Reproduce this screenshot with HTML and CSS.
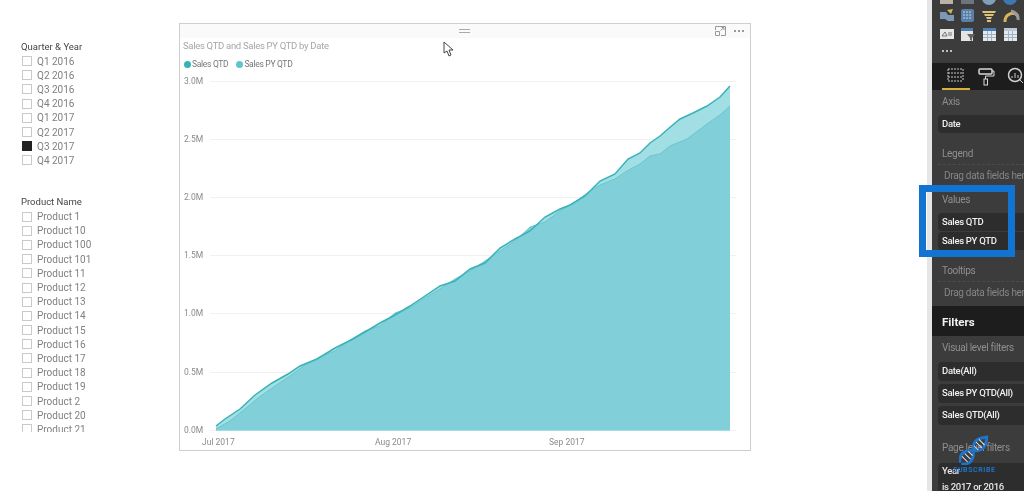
FILE: index.html
```html
<!DOCTYPE html>
<html lang="en">
<head>
  <meta charset="UTF-8">
  <title>Sales QTD report</title>
  <link rel="stylesheet" href="styles.css">
</head>
<body>
  <div class="page">

    <div class="slicers">
      <div class="slicer">
        <div class="slicer-title">Quarter &amp; Year</div>
        <div class="item"><span class="box"></span>Q1 2016</div>
        <div class="item"><span class="box"></span>Q2 2016</div>
        <div class="item"><span class="box"></span>Q3 2016</div>
        <div class="item"><span class="box"></span>Q4 2016</div>
        <div class="item"><span class="box"></span>Q1 2017</div>
        <div class="item"><span class="box"></span>Q2 2017</div>
        <div class="item"><span class="box checked"></span>Q3 2017</div>
        <div class="item"><span class="box"></span>Q4 2017</div>
      </div>
      <div class="slicer products">
        <div class="slicer-title">Product Name</div>
        <div class="item"><span class="box"></span>Product 1</div>
        <div class="item"><span class="box"></span>Product 10</div>
        <div class="item"><span class="box"></span>Product 100</div>
        <div class="item"><span class="box"></span>Product 101</div>
        <div class="item"><span class="box"></span>Product 11</div>
        <div class="item"><span class="box"></span>Product 12</div>
        <div class="item"><span class="box"></span>Product 13</div>
        <div class="item"><span class="box"></span>Product 14</div>
        <div class="item"><span class="box"></span>Product 15</div>
        <div class="item"><span class="box"></span>Product 16</div>
        <div class="item"><span class="box"></span>Product 17</div>
        <div class="item"><span class="box"></span>Product 18</div>
        <div class="item"><span class="box"></span>Product 19</div>
        <div class="item"><span class="box"></span>Product 2</div>
        <div class="item"><span class="box"></span>Product 20</div>
        <div class="item"><span class="box"></span>Product 21</div>
      </div>
    </div>

    <div class="chart-card">
      <div class="card-top">
        <div class="handle"></div>
        <svg class="focus-icon" width="11" height="10" viewBox="0 0 11 10">
          <path d="M.5 4V.5h10v9H6M.5 5.500h4v4h-4zM5.500 4.500 9 1.500M6.500 1.500H9V4" fill="none" stroke="#9a9a9a"/>
        </svg>
        <div class="more"><span></span><span></span><span></span></div>
      </div>
      <div class="chart-title">Sales QTD and Sales PY QTD by Date</div>
      <div class="legend">
        <div class="legend-item"><span class="dot"></span>Sales QTD</div>
        <div class="legend-item"><span class="dot py"></span>Sales PY QTD</div>
      </div>
      <svg class="plot" width="570" height="378" viewBox="180 72 570 378">
        <g class="grid">
          <line x1="210" y1="80.5" x2="736" y2="80.5"/>
          <line x1="210" y1="138.5" x2="736" y2="138.5"/>
          <line x1="210" y1="196.5" x2="736" y2="196.5"/>
          <line x1="210" y1="254.5" x2="736" y2="254.5"/>
          <line x1="210" y1="312.5" x2="736" y2="312.5"/>
          <line x1="210" y1="371.5" x2="736" y2="371.5"/>
          <line x1="210" y1="429.5" x2="736" y2="429.5"/>
        </g>
        <g class="axis">
          <text x="184" y="83">3.0M</text>
          <text x="184" y="141">2.5M</text>
          <text x="184" y="199">2.0M</text>
          <text x="184" y="257">1.5M</text>
          <text x="184" y="315">1.0M</text>
          <text x="184" y="374">0.5M</text>
          <text x="184" y="432">0.0M</text>
          <text x="202" y="444">Jul 2017</text>
          <text x="375" y="444">Aug 2017</text>
          <text x="549" y="444">Sep 2017</text>
        </g>
        <polygon class="area-qtd" points="216,429.500 216,425 225,418 240,408 255,394 272,382 288,373 300,365 317,358 335,347 353,338 365,331 380,322 395,314 410,305 425,295 440,285 455,280 470,268 485,262 500,247 515,238 530,230 545,216 560,208 570,204 585,195 600,180 615,173 628,158 640,152 650,142 660,135 668,128 680,118 693,112 707,105 720,96 730,85 730,429.500"/>
        <polygon class="area-py" points="216,429.500 216,428 230,420 245,408 258,397 275,385 290,375 305,364 320,356 335,350 350,339 365,330 380,325 395,312 410,307 425,297 440,288 455,278 470,270 485,260 500,250 515,240 530,226 545,221 560,210 575,201 590,190 600,184 615,178 627,170 640,163 650,155 660,153 670,145 687,138 707,123 720,114 730,105 730,429.500"/>
        <polyline class="line-py" points="216,428 230,420 245,408 258,397 275,385 290,375 305,364 320,356 335,350 350,339 365,330 380,325 395,312 410,307 425,297 440,288 455,278 470,270 485,260 500,250 515,240 530,226 545,221 560,210 575,201 590,190 600,184 615,178 627,170 640,163 650,155 660,153 670,145 687,138 707,123 720,114 730,105"/>
        <polyline class="line-qtd" points="216,425 225,418 240,408 255,394 272,382 288,373 300,365 317,358 335,347 353,338 365,331 380,322 395,314 410,305 425,295 440,285 455,280 470,268 485,262 500,247 515,238 530,230 545,216 560,208 570,204 585,195 600,180 615,173 628,158 640,152 650,142 660,135 668,128 680,118 693,112 707,105 720,96 730,85"/>
      </svg>
    </div>

    <div class="panel">
      <div class="viz-icons">
        <svg width="92" height="63" viewBox="933 0 92 63">
          <rect x="941" y="-6" width="13" height="10" fill="#b9b2a4"/>
          <rect x="962" y="-6" width="13" height="10" fill="#6d7480"/>
          <circle cx="990" cy="-2" r="7" fill="#7f9fbd"/>
          <circle cx="1011" cy="-2" r="7" fill="#3d78b0"/>
          <path d="M941 12h6l2 3h6v6h-6l-3-2h-5z" fill="#7d97b5"/>
          <path d="M948 10l6-1-2 5z" fill="#d6b65c"/>
          <rect x="962" y="9" width="13" height="13" rx="2" fill="#5b7fa8"/>
          <path d="M964 12h9M964 15h9M964 18h9" stroke="#c5d4e4" stroke-dasharray="2 1"/>
          <path d="M983 11h14l-1 2h-12zM985 14h10l-1 2h-8zM987 17h6l-1 2h-4zM988 20h4v2h-4z" fill="#d9c47a"/>
          <path d="M1006 22a7.500 8 0 0 1 13-6" fill="none" stroke="#d6b65c" stroke-width="3"/>
          <path d="M1012 11a8 8 0 0 1 7 9" fill="none" stroke="#9b9b9b" stroke-width="3"/>
          <rect x="941" y="29" width="14" height="10" fill="#e6e6e6"/>
          <path d="M943 36l3-4 2 4zM949 33h4M949 35h4" stroke="#777" fill="none"/>
          <rect x="962" y="28" width="12" height="13" fill="#e4e4e4"/>
          <rect x="962" y="28" width="12" height="3" fill="#4d7fb5"/>
          <path d="M968 34h8l-3 4v3l-2-1v-2z" fill="#666"/>
          <rect x="984" y="28" width="13" height="13" fill="#e8e8e8"/>
          <rect x="984" y="28" width="13" height="3" fill="#4d7fb5"/>
          <path d="M988.500 31v10M992.500 31v10M984 34.500h13M984 37.500h13" stroke="#9bb3cc"/>
          <rect x="1005" y="28" width="13" height="13" fill="#e8e8e8"/>
          <rect x="1005" y="28" width="13" height="3" fill="#b9c6d4"/>
          <path d="M1009.500 31v10M1013.500 31v10M1005 34.500h13M1005 37.500h13" stroke="#9bb3cc"/>
          <g fill="#bdbdbd">
            <rect x="943" y="50" width="2" height="2"/>
            <rect x="947" y="50" width="2" height="2"/>
            <rect x="951" y="50" width="2" height="2"/>
          </g>
        </svg>
      </div>

      <div class="tabs">
        <svg width="92" height="26" viewBox="933 63 92 26">
          <path d="M949 69h15M949 73h15M949 77h15M949 81h15M949 69v12M964 69v12" fill="none" stroke="#c9c9c9" stroke-dasharray="2 1"/>
          <rect x="980" y="69" width="13" height="5" rx="1" fill="none" stroke="#d8d8d8" stroke-width="1.500"/>
          <path d="M993 71h2v5h-8.500v3" fill="none" stroke="#d8d8d8"/>
          <rect x="985" y="79" width="3.500" height="6" fill="none" stroke="#d8d8d8"/>
          <circle cx="1016" cy="75" r="6.500" fill="none" stroke="#d0d0d0" stroke-width="1.500"/>
          <path d="M1013 78v-2M1016 78v-5M1019 78v-3M1021 80l3 3" stroke="#d0d0d0" fill="none"/>
        </svg>
      </div>

      <div class="label first">Axis</div>
      <div class="field">Date</div>

      <div class="label">Legend</div>
      <div class="well">Drag data fields here</div>

      <div class="label values">Values</div>
      <div class="field">Sales QTD</div>
      <div class="field tight">Sales PY QTD</div>

      <div class="label">Tooltips</div>
      <div class="well tall">Drag data fields here</div>

      <div class="filters-bar">Filters</div>

      <div class="label visual">Visual level filters</div>
      <div class="field filter first-filter">Date(All)</div>
      <div class="field filter">Sales PY QTD(All)</div>
      <div class="field filter">Sales QTD(All)</div>

      <div class="label page-level">Page level filters</div>
      <div class="year-box">
        <div>Year</div>
        <div>is 2017 or 2016</div>
      </div>
    </div>

    <div class="highlight"></div>

    <div class="watermark">
      <svg width="30" height="30" viewBox="0 0 30 30">
        <g transform="translate(15 15) rotate(-45)" fill="none">
          <path d="M-19-1C-13-8-7-7-1 0S11 7 19-1" stroke="#1f74c8" stroke-width="3"/>
          <path d="M-19 1C-13 8-7 7-1 0S11-7 19 1" stroke="#1f74c8" stroke-width="3"/>
          <path d="M-13-4v8M-9-4v8M-5-3v6M3-3v6M7-4v8M11-4v8" stroke="#d5e6f5"/>
        </g>
      </svg>
      <div class="subscribe">SUBSCRIBE</div>
    </div>

    <svg class="cursor" width="11" height="16" viewBox="0 0 11 16">
      <path d="M1 1v11l3-2 2 5 2-1-2-5h4z" fill="#fff" stroke="#444"/>
    </svg>

  </div>
</body>
</html>
```

FILE: styles.css
```css
body {
  margin: 0;
  background: #fff;
  font-family: Roboto, "Liberation Sans", sans-serif;
  font-size: 10px;
}

.page {
  position: relative;
  display: flex;
  height: 491px;
  overflow: hidden;
  filter: blur(0.35px);
}

/* slicers */
.slicers {
  width: 179px;
  flex: none;
  padding: 39px 0 0 21px;
  box-sizing: border-box;
}

.slicer-title {
  height: 15px;
  font-size: 9.5px;
  line-height: 15px;
  color: #444;
}

.item {
  display: flex;
  align-items: center;
  height: 14.2px;
  color: #808080;
}

.box {
  width: 8px;
  height: 8px;
  margin: 0 5px 0 1px;
  border: 1px solid #c9c9c9;
}

.box.checked {
  background: #222;
  border-color: #222;
}

.products {
  height: 238px;
  margin-top: 26px;
  overflow: hidden;
}

.products .slicer-title {
  height: 16px;
}

/* chart */
.chart-card {
  width: 572px;
  height: 428px;
  flex: none;
  margin-top: 23px;
  border: 1px solid #cfcfcf;
  box-sizing: border-box;
}

.card-top {
  position: relative;
  display: flex;
  justify-content: flex-end;
  align-items: center;
  gap: 8px;
  height: 14px;
  padding-right: 6px;
  background: #fafafa;
}

.handle {
  position: absolute;
  left: 279px;
  top: 5px;
  width: 11px;
  height: 2px;
  border-top: 1px solid #aaa;
  border-bottom: 1px solid #aaa;
}

.more {
  display: flex;
  gap: 2px;
}

.more span {
  width: 2px;
  height: 2px;
  background: #999;
}

.chart-title {
  height: 14px;
  margin-top: 1px;
  padding-left: 3px;
  font-size: 9.5px;
  line-height: 14px;
  letter-spacing: -0.3px;
  color: #a6a6a6;
  white-space: nowrap;
}

.legend {
  display: flex;
  gap: 8px;
  height: 14px;
  margin-top: 4px;
  padding-left: 4px;
  line-height: 14px;
  font-size: 8.5px;
  letter-spacing: -0.3px;
  color: #777;
}

.legend-item {
  display: flex;
  align-items: center;
  gap: 1px;
}

.dot {
  width: 7px;
  height: 7px;
  border-radius: 50%;
  background: #35b4b8;
}

.dot.py {
  background: #5fc4cc;
}

.plot {
  display: block;
  margin-top: 2px;
}

.grid line {
  stroke: #f1f1f1;
}

.axis text {
  font-size: 8.5px;
  fill: #8a8a8a;
}

.area-qtd {
  fill: #a2dfe5;
}

.area-py {
  fill: #80cfd9;
}

.line-qtd {
  fill: none;
  stroke: #39b2b8;
  stroke-width: 1.5;
}

.line-py {
  fill: none;
  stroke: #6cc5cc;
  stroke-width: 1;
}

/* right pane */
.panel {
  width: 92px;
  flex: none;
  margin-left: auto;
  border-left: 5px solid #e6e6e6;
  background: #3c3c3c;
  color: #8f8f8f;
  white-space: nowrap;
  letter-spacing: -0.3px;
  overflow: hidden;
}

.viz-icons {
  height: 63px;
}

.viz-icons svg,
.tabs svg {
  display: block;
}

.tabs {
  position: relative;
  height: 27px;
  background: #1d1d1d;
}

.tabs::after {
  content: "";
  position: absolute;
  left: 10px;
  bottom: 0;
  width: 28px;
  height: 2px;
  background: #d6b23c;
}

.label {
  height: 14px;
  margin-top: 14px;
  padding-left: 10px;
  line-height: 14px;
}

.label.first {
  margin-top: 5px;
}

.label.values {
  margin-top: 9px;
}

.label.visual {
  margin-top: 5px;
}

.label.page-level {
  margin-top: 16px;
}

.field {
  height: 18px;
  margin: 6px 0 0 6px;
  padding-left: 4px;
  border-radius: 4px 0 0 4px;
  background: #2d2d2d;
  color: #f0f0f0;
  font-size: 9.5px;
  font-weight: 500;
  line-height: 18px;
}

.field.tight {
  margin-top: 1px;
}

.field.filter {
  height: 19px;
  margin-top: 3px;
  line-height: 18px;
}

.field.first-filter {
  margin-top: 7px;
}

.well {
  height: 20px;
  margin: 3px 0 0 6px;
  padding-left: 6px;
  border-top: 1px dashed #4c4c4c;
  box-sizing: border-box;
  line-height: 22px;
  color: #858585;
}

.well.tall {
  height: 22px;
}

.filters-bar {
  height: 30px;
  margin-top: 3px;
  padding: 0 0 0 10px;
  background: #1d1d1d;
  color: #f2f2f2;
  font-size: 11.5px;
  font-weight: 700;
  line-height: 32px;
  letter-spacing: 0;
}

.year-box {
  height: 40px;
  margin: 8px 0 0 6px;
  padding: 0 0 0 4px;
  border-radius: 4px 0 0 4px;
  background: #2d2d2d;
  color: #e6e6e6;
  font-size: 9.5px;
  line-height: 16px;
  font-weight: 500;
}

/* overlays */
.highlight {
  position: absolute;
  left: 919px;
  top: 185px;
  width: 96px;
  height: 72px;
  border: 7px solid #1274d0;
  box-sizing: border-box;
}

.watermark {
  position: absolute;
  left: 953px;
  top: 435px;
  width: 42px;
  text-align: center;
}

.watermark svg {
  display: block;
  margin: 0 auto;
}

.subscribe {
  margin-top: 1px;
  color: #1f74c8;
  font-size: 7px;
  font-weight: 700;
  line-height: 8px;
  letter-spacing: 0.6px;
}

.cursor {
  position: absolute;
  left: 443px;
  top: 41px;
}
```
